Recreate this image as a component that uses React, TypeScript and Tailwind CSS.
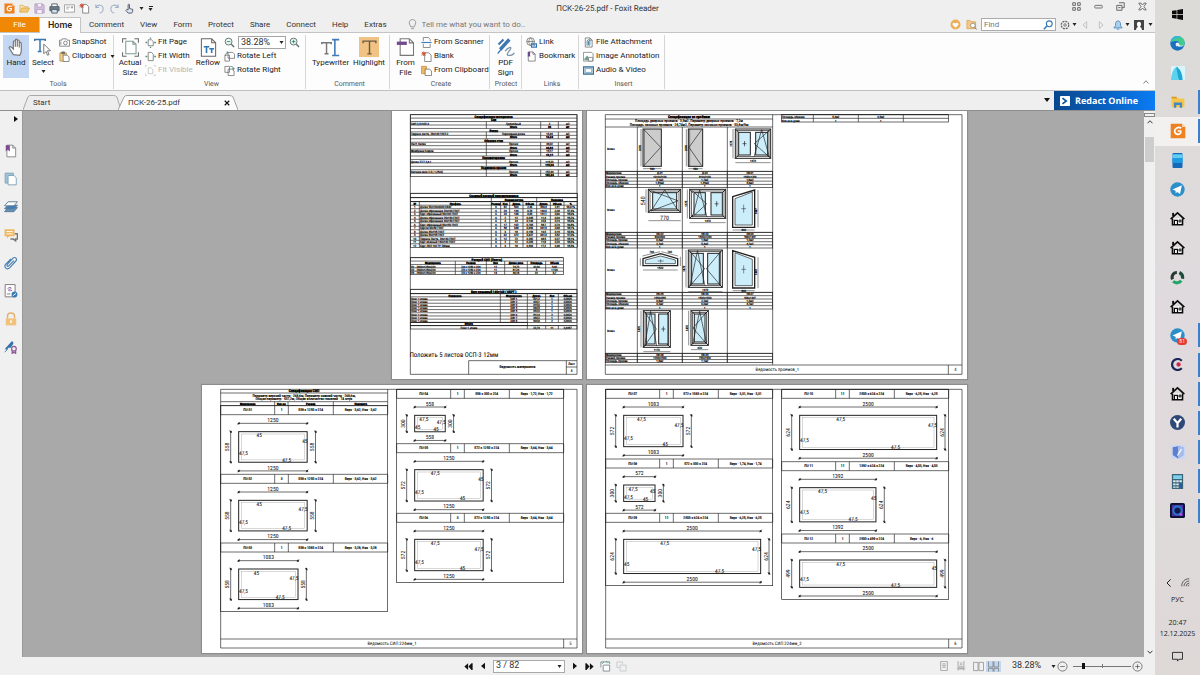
import React from "react";

type Kids = { children?: React.ReactNode };

/* ---------- icon helper ---------- */

function Ico({ s = 12, vb = 24, children, sw = 1.6, c = "#555" }: Kids & { s?: number; vb?: number; sw?: number; c?: string }) {
  return (
    <svg width={s} height={s} viewBox={`0 0 ${vb} ${vb}`} fill="none" stroke={c} strokeWidth={sw} className="shrink-0" aria-hidden="true">
      {children}
    </svg>
  );
}

const Caret = () => (
  <svg width="5" height="3" viewBox="0 0 5 3" className="shrink-0" aria-hidden="true">
    <path d="M0.5 0h4L2.5 3z" fill="#222" />
  </svg>
);

const FoxitMark = ({ s = 11 }: { s?: number }) => (
  <Ico s={s} sw={0}>
    <path d="M1 1h17l5 5v17H1z" fill="#ee8122" />
    <path d="M18 1v5h5z" fill="#fbd9b0" />
    <path d="M17 7.5C12 5 7 8 7 12.500c0 4.500 6 6 9 2.500v-3h-4.500" stroke="#fff" strokeWidth="2.600" fill="none" />
  </Ico>
);

const PageShape = ({ c = "#666" }: { c?: string }) => <path d="M5 2h10l5 5v15H5zM15 2v5h5" stroke={c} fill="#fff" />;

/* ---------- title bar ---------- */

function TitleBar() {
  const quick: [string, React.ReactNode][] = [
    ["Open", <Ico s={11} sw={1.5} c="#d9a548"><path d="M2 20V5h7l2 3h8v3" fill="#fbe3b0" /><path d="M2 20l4-9h17l-4 9z" fill="#f4c874" /></Ico>],
    ["Save", <Ico s={11} sw={2} c="#b79ac6"><path d="M2 2h17l3 3v17H2z" fill="#d5c3df" /><path d="M7 2v7h10V2M6 22v-8h12v8" fill="#f4eef7" /></Ico>],
    ["Print", <Ico s={11} sw={2} c="#4f5d68"><path d="M6 8V2h12v6" fill="#fff" /><path d="M2 8h20v9H2z" fill="#6d7c88" /><path d="M6 14h12v8H6z" fill="#cfe3f0" /></Ico>],
    ["Email", <Ico s={11} sw={1.6} c="#888"><path d="M1 4h22v16H1z" fill="#fff" /><path d="M5 9h8M5 13h5M16 8h3v3h-3z" /></Ico>],
    ["New", <Ico s={11} sw={1.6} c="#666"><path d="M8 3h8l5 5v14H8z" fill="#fff" /><path d="M1 6h10M6 1v10M2.500 2.500l7 7M9.500 2.500l-7 7" stroke="#d2452b" strokeWidth="2" /></Ico>],
    ["Undo", <Ico s={11} sw={2.2} c="#9fb0cc"><path d="M4 3v7h7M4 10c3-8 16-7 16 3 0 4-3 8-8 9" /></Ico>],
    ["Redo", <Ico s={11} sw={2.2} c="#9fb0cc"><path d="M20 3v7h-7M20 10C17 2 4 3 4 13c0 4 3 8 8 9" /></Ico>],
    ["Touch mode", <Ico s={11} sw={2} c="#556"><path d="M9 15V4c0-2 3-2 3 0v8l7 2v4l-2 4H9l-5-6 2-2z" fill="#dce8f2" /></Ico>],
  ];
  return (
    <header className="flex h-[17px] items-center px-1">
      <div className="flex flex-1 items-center gap-1">
        <FoxitMark />
        {quick.map(([n, i]) => (
          <button key={n} aria-label={n} className="flex w-[11px] justify-center">{i}</button>
        ))}
        <Caret />
        <button aria-label="Customize" className="flex flex-col items-center gap-px"><span className="h-px w-1 bg-[#222]" /><Caret /></button>
      </div>
      <h1 className="pl-16 text-[8px] leading-none text-[#333]">ПСК-26-25.pdf - Foxit Reader</h1>
      <div className="flex flex-1 items-center justify-end gap-[13px] pr-1 pb-1">
        <button aria-label="Layout"><Ico s={9} c="#666" sw={2.600}><path d="M2 2h7v7H2zM15 2h7v7h-7zM2 15h7v7H2zM15 15h7v7h-7z" /></Ico></button>
        <button aria-label="Minimize"><Ico s={9} c="#666" sw={2.400}><rect x="2" y="9" width="20" height="7" rx="2" /></Ico></button>
        <button aria-label="Restore"><Ico s={9} c="#666" sw={2.600}><path d="M8 2h14v13h-6M2 9h14v13H2zM6 15h6" /></Ico></button>
        <button aria-label="Close"><Ico s={9} c="#666" sw={2.400}><path d="M2 3h6l4 5 4-5h6l-6 9 6 9h-6l-4-5-4 5H2l6-9z" /></Ico></button>
      </div>
    </header>
  );
}

function MenuTabs() {
  const tabs = ["Comment", "View", "Form", "Protect", "Share", "Connect", "Help", "Extras"];
  return (
    <nav className="flex h-4 items-stretch border-b border-[#c4c4c4] text-[8px] text-[#333]">
      <button className="w-[39px] bg-[#f08705] text-white">File</button>
      <button className="-mb-px w-[42px] border border-b-0 border-[#c4c4c4] bg-[#fdfdfd] text-[9px] font-medium text-[#222]">Home</button>
      {tabs.map((t) => <button key={t} className="px-2">{t}</button>)}
      <label className="ml-3 flex items-center gap-1 text-[#777]">
        <Ico s={11} c="#888" sw={1.800}><path d="M8 17c0-3-3-4-3-9 0-9 14-9 14 0 0 5-3 6-3 9zM9 21h6" /></Ico>
        <input className="w-32 bg-transparent outline-none placeholder:text-[#777]" placeholder="Tell me what you want to do.." />
      </label>
      <div className="ml-auto flex items-center gap-1 pr-0.5">
        <button aria-label="Favourites"><Ico s={11} sw={0}><circle cx="12" cy="12" r="11" fill="#eeae57" /><path d="M12 19l-6-6c-2-4 3-7 6-3 3-4 8-1 6 3z" fill="#fff" /></Ico></button>
        <button aria-label="Search folder" className="ml-px"><Ico s={11} c="#d89b45" sw={1.500}><path d="M2 3h7l2 3h10v15H2z" fill="#f5c985" /><circle cx="15" cy="14" r="5" fill="#fff" stroke="#777" /><path d="M19 18l4 5" stroke="#777" strokeWidth="2" /></Ico></button>
        <label className="flex h-[13px] w-[75px] items-center border border-[#ababab] bg-white px-0.5">
          <input aria-label="Find" placeholder="Find" className="min-w-0 flex-1 bg-transparent text-[8px] outline-none placeholder:text-[#777]" />
          <Ico s={10} c="#2f74b5" sw={2.600}><circle cx="15" cy="9" r="7" /><path d="M10 14l-8 8" strokeWidth="3.500" /></Ico>
        </label>
        <button aria-label="Settings" className="flex items-center gap-0.5"><Ico s={10} c="#666" sw={2}><circle cx="12" cy="12" r="3" /><circle cx="12" cy="12" r="9" strokeDasharray="5 2" strokeWidth="3" /></Ico><Caret /></button>
        <button aria-label="Previous"><Ico s={8} c="#aaa" sw={2}><path d="M17 2v20L6 12z" /></Ico></button>
        <button aria-label="Next" className="ml-1"><Ico s={8} c="#aaa" sw={2}><path d="M7 2v20l11-10z" /></Ico></button>
        <button aria-label="Notifications" className="ml-1 flex items-center gap-0.5"><Ico s={10} c="#4486bd" sw={2}><path d="M2 19l4-5V9c0-9 12-9 12 0v5l4 5z" fill="#a9d0ee" /><path d="M9 22h6" /></Ico><Caret /></button>
        <button aria-label="Account" className="flex items-center gap-1"><Ico s={10} sw={0}><path d="M0 0h24v24H0z" fill="#444" /><path d="M5 24c0-5 3-6 5-7-5-6-3-13 2-13s7 7 2 13c2 1 5 2 5 7z" fill="#fff" /></Ico><Caret /></button>
      </div>
    </nav>
  );
}

/* ---------- ribbon ---------- */

function Group({ label, w, children }: Kids & { label: string; w: string }) {
  return (
    <section className={`${w} flex shrink-0 flex-col border-r border-[#d6d6d6]`}>
      <div className="flex flex-1 items-start">{children}</div>
      <h2 className="text-center text-[7px] leading-[9px] text-[#555]">{label}</h2>
    </section>
  );
}

function Big({ icon, lines, w, active, caret }: { icon: React.ReactNode; lines: string[]; w: string; active?: boolean; caret?: boolean }) {
  return (
    <button className={`${w} ${active ? "bg-[#c3d7f3]" : ""} flex h-[43px] shrink-0 flex-col items-center pt-px text-[8px] leading-[10px] text-[#222]`}>
      <span className="flex h-[22px] items-center">{icon}</span>
      {lines.map((l) => <span key={l} className="whitespace-nowrap">{l}</span>)}
      {caret && <span className="pt-0.5"><Caret /></span>}
    </button>
  );
}

function Row({ icon, label, off, caret }: { icon: React.ReactNode; label: string; off?: boolean; caret?: boolean }) {
  return (
    <button className={`flex h-[14px] items-center gap-0.5 whitespace-nowrap text-[8px] ${off ? "text-[#b5b5b5]" : "text-[#222]"}`}>
      {icon}{label}{caret && <span className="pl-0.5"><Caret /></span>}
    </button>
  );
}

const I = {
  hand: <Ico s={19} c="#777" sw={1.500}><path d="M8 21l-5-8c-1-2 1-3 3-1l2 2V5c0-2 2.500-2 2.500 0v6-8c0-2 2.500-2 2.500 0v8-7c0-2 2.500-2 2.500 0v8-5c0-2 2.500-2 2.500 0v9c0 3-1 4-2 6z" fill="#fff" /></Ico>,
  select: <Ico s={18} c="#3a76b0" sw={2}><path d="M1 4V2h14v2M8 2v16M5 18h5" /><path d="M13 8v13l3-3 2 5 2-1-2-5h4z" fill="#fff" stroke="#777" strokeWidth="1.300" /></Ico>,
  snap: <Ico s={11} c="#666"><path d="M1 7h5l1-3h9l2 3h5v13H1z" fill="#fff" /><circle cx="14" cy="13" r="4" /><path d="M4 10v7" /></Ico>,
  clip: <Ico s={11} c="#b28a3d"><path d="M2 4h14v18H2z" fill="#f1cf8b" /><path d="M6 2h6v4H6z" fill="#777" stroke="#666" /><path d="M9 9h9l4 4v10H9z" fill="#fff" stroke="#666" /></Ico>,
  actual: <Ico s={19} c="#666" sw={1.300}><path d="M6 4h9l4 4v12H6zM15 4v4h4" fill="#fff" stroke="#7d9c90" /><path d="M2 6V1h5M17 1h5v5M2 18v5h5M17 23h5v-5" /></Ico>,
  fitPage: <Ico s={11} c="#666"><path d="M7 6h7l4 4v9H7z" fill="#fff" /><path d="M12 1v3M12 21v3M1 12h4M20 12h4" stroke="#5d8f7c" strokeWidth="3" /></Ico>,
  fitWidth: <Ico s={11} c="#666"><path d="M7 3h7l4 4v14H7z" fill="#fff" /><path d="M1 12h4M20 12h4" stroke="#5d8f7c" strokeWidth="3" /></Ico>,
  fitVis: <Ico s={11} c="#bbb"><path d="M7 6h6l4 4v9H7z" /><path d="M1 5V1h4M19 1h4v4M1 19v4h4M19 23h4v-4" strokeDasharray="3 1" /></Ico>,
  reflow: <Ico s={19} c="#666" sw={1.300}><path d="M3 1h13l5 5v17H3zM16 1v5h5" fill="#fff" /><path d="M6 11h7M9.500 11v8M13 13.500h6M16 13.500V19" stroke="#3276b5" strokeWidth="2" /></Ico>,
  minus: <Ico s={11} c="#5d6f70" sw={2}><circle cx="10" cy="10" r="7.500" fill="#eef8f3" /><path d="M6 10h8" stroke="#35906d" /><path d="M16 16l6 6" strokeWidth="3" /></Ico>,
  plus: <Ico s={11} c="#5d6f70" sw={2}><circle cx="10" cy="10" r="7.500" fill="#eef8f3" /><path d="M6 10h8M10 6v8" stroke="#35906d" /><path d="M16 16l6 6" strokeWidth="3" /></Ico>,
  rotL: <Ico s={11} c="#666"><path d="M9 3h10l4 4v9H9zM2 9h10v13H2z" fill="#fff" /><path d="M3 11c0-5 2-7 6-8M6 1l3 2-2 3" stroke="#4c927b" strokeWidth="2" /></Ico>,
  rotR: <Ico s={11} c="#666"><path d="M2 3h10v13H2zM9 9h8l5 4v10H9z" fill="#fff" /><path d="M14 3c5 0 7 2 7 6M18 7l3 3 2-3" stroke="#4c927b" strokeWidth="2" /></Ico>,
  type: <Ico s={19} c="#777" sw={1.800}><path d="M1 8V6h12v2M7 6v14M4.500 20h5" /><path d="M14 2h3.500v20M23 2h-4.500M14 22h9" stroke="#3f7cb8" strokeWidth="2" /></Ico>,
  high: <span className="flex h-[20px] w-[20px] items-center justify-center bg-[#f0c283]"><Ico s={17} c="#6a5a45" sw={2}><path d="M3 6V3h18v3M12 3v18M9 21h6" /></Ico></span>,
  file: <Ico s={20} c="#777" sw={1.300}><path d="M5 2h11l5 5v15H5zM16 2v5h5" fill="#fff" /><path d="M1 7.500h12" stroke="#714a93" strokeWidth="4" /></Ico>,
  scan: <Ico s={11} c="#666"><path d="M5 9V1h11l4 4v4M5 15v8h15v-8" fill="#fff" /><path d="M1 12h22" stroke="#3f7fb5" strokeWidth="2.500" /></Ico>,
  blank: <Ico s={11} c="#666"><path d="M8 4h9l5 5v14H8z" fill="#fff" /><path d="M1 6h10M6 1v10M2 2l8 8M10 2l-8 8" stroke="#cf4a2c" strokeWidth="2" /></Ico>,
  fromClip: <Ico s={11} c="#c68d36"><path d="M1 3h11v16H1z" fill="#eeb765" /><path d="M9 9h9l5 4v10H9z" fill="#fff" stroke="#666" /></Ico>,
  sign: <Ico s={20} c="#3c77b0" sw={3}><path d="M5 15L16 3" strokeWidth="4" /><path d="M3 9L9 3" strokeWidth="2.500" /><path d="M2 20l4-5" strokeWidth="1.500" /><path d="M11 17c3-5 9-6 6-2s-6 8 0 7c2 0 4-1 5-3" strokeWidth="1.500" stroke="#7a93ab" /></Ico>,
  link: <Ico s={11} c="#666"><circle cx="10" cy="10" r="8.500" /><path d="M2 10h17M10 2c-5 5-5 11 0 16M10 2c5 5 5 11 0 16" /><path d="M12 15h11v7H12zM16 18h4" stroke="#3476b2" strokeWidth="2.500" /></Ico>,
  bookmark: <Ico s={11} c="#666"><PageShape /><path d="M4 2h5v11l-2.500-2L4 13z" fill="#70488e" stroke="none" /></Ico>,
  attach: <Ico s={11} c="#666"><PageShape /><path d="M9 19V9c0-4 6-4 6 0v8c0 2-3 2-3 0V9" stroke="#3c7d9d" strokeWidth="2" /></Ico>,
  image: <Ico s={11} c="#777"><path d="M1 3h18l3 3v16H1z" fill="#fff" /><path d="M3 17l6-7 5 6 3-3 4 5v2H3z" fill="#6fa38c" stroke="none" /><path d="M12 14h9v8h-9z" fill="#fff" /></Ico>,
  video: <Ico s={11} c="#3c6e93" sw={2.500}><path d="M1 4h22v16H1z" fill="#b7d5e6" /><path d="M5 8h14v8H5z" fill="#fff" strokeWidth="1" /></Ico>,
};

function Ribbon() {
  return (
    <div className="flex h-[58px] items-stretch border-b border-[#c0c0c0] bg-[#fdfdfd] pt-0.5 pb-px">
      <Group label="Tools" w="w-[114px] pl-[3px]">
        <Big icon={I.hand} lines={["Hand"]} w="w-[26px]" active />
        <Big icon={I.select} lines={["Select"]} w="w-[28px]" caret />
        <div className="pl-0.5"><Row icon={I.snap} label="SnapShot" /><Row icon={I.clip} label="Clipboard" caret /></div>
      </Group>
      <Group label="View" w="w-[192px] pl-1">
        <Big icon={I.actual} lines={["Actual", "Size"]} w="w-[24px]" />
        <div className="w-[51px] shrink-0 pl-[3px]"><Row icon={I.fitPage} label="Fit Page" /><Row icon={I.fitWidth} label="Fit Width" /><Row icon={I.fitVis} label="Fit Visible" off /></div>
        <Big icon={I.reflow} lines={["Reflow"]} w="w-[30px]" />
        <div className="pl-px">
          <div className="flex h-[14px] items-center gap-[3px]">
            <button aria-label="Zoom out">{I.minus}</button>
            <span className="relative flex items-center">
              <select aria-label="Zoom level" className="h-[13px] w-12 appearance-none border border-[#a5a5a5] bg-white pl-0.5 text-[9px] leading-none text-[#333]"><option>38.28%</option></select>
              <span className="pointer-events-none absolute right-0.5"><Caret /></span>
            </span>
            <button aria-label="Zoom in">{I.plus}</button>
          </div>
          <Row icon={I.rotL} label="Rotate Left" /><Row icon={I.rotR} label="Rotate Right" />
        </div>
      </Group>
      <Group label="Comment" w="w-[84px] pl-1">
        <Big icon={I.type} lines={["Typewriter"]} w="w-[41px]" />
        <Big icon={I.high} lines={["Highlight"]} w="w-[36px]" />
      </Group>
      <Group label="Create" w="w-[100px] pl-[3px]">
        <Big icon={I.file} lines={["From", "File"]} w="w-[25px]" />
        <div className="pl-[3px]"><Row icon={I.scan} label="From Scanner" /><Row icon={I.blank} label="Blank" /><Row icon={I.fromClip} label="From Clipboard" /></div>
      </Group>
      <Group label="Protect" w="w-[32px] pl-px"><Big icon={I.sign} lines={["PDF", "Sign"]} w="w-[29px]" /></Group>
      <Group label="Links" w="w-[57px] pl-1"><div><Row icon={I.link} label="Link" /><Row icon={I.bookmark} label="Bookmark" /></div></Group>
      <Group label="Insert" w="w-[86px] pl-1"><div><Row icon={I.attach} label="File Attachment" /><Row icon={I.image} label="Image Annotation" /><Row icon={I.video} label="Audio & Video" /></div></Group>
      <button aria-label="Collapse ribbon" className="mt-auto mr-1.5 mb-1 ml-auto"><Ico s={6} c="#555" sw={3}><path d="M2 18L12 7l10 11" /></Ico></button>
    </div>
  );
}

function DocTab({ label, w, fill, close }: { label: string; w: string; fill: string; close?: boolean }) {
  return (
    <div className={`${w} relative flex h-[15px] items-center justify-between pt-px pr-2 pl-2.5 text-[8px] text-[#333]`}>
      <svg className="absolute inset-0 h-full w-full" viewBox="0 0 120 15" preserveAspectRatio="none" aria-hidden="true">
        <path d="M0 15L6 2Q7 .5 9 .5H111Q114 .5 115 2L120 15" fill={fill} stroke="#a0a0a0" />
      </svg>
      <button className="relative">{label}</button>
      {close && <button aria-label="Close tab" className="relative"><Ico s={6} c="#111" sw={4.500}><path d="M3 3l18 18M21 3L3 21" /></Ico></button>}
    </div>
  );
}

function DocTabs() {
  return (
    <div className="flex h-[20px] items-end border-b border-[#8e8e8e] pl-[23px]">
      <DocTab label="Start" w="w-[98px]" fill="#ededed" />
      <div className="-ml-[3px]"><DocTab label="ПСК-26-25.pdf" w="w-[120px]" fill="#fcfcfc" close /></div>
      <button aria-label="Tab list" className="mr-1 mb-[7px] ml-auto"><Ico s={6} sw={0}><path d="M0 4h24L12 20z" fill="#111" /></Ico></button>
      <a href="#redact" className="flex h-[19px] w-[101px] items-center gap-[5px] bg-linear-to-r from-[#08478f] to-[#0a7cf5] pl-1.5 font-['Open_Sans',sans-serif] text-[9px] font-bold text-white">
        <Ico s={10} sw={0}><rect width="24" height="24" rx="2" fill="#fff" /><path d="M6 5l9 7-9 7" stroke="#0c519c" strokeWidth="4" /></Ico>
        Redact Online
      </a>
    </div>
  );
}

function SideBar() {
  const items: [string, React.ReactNode][] = [
    ["Bookmarks", <Ico s={14} c="#888"><PageShape c="#888" /><path d="M3 2h7v11l-3.500-3L3 13z" fill="#7b4a92" stroke="none" /></Ico>],
    ["Pages", <Ico s={14} c="#7da4b8"><path d="M2 2h14v17H2z" fill="#9fc4d6" /><path d="M7 6h10l4 4v12H7z" fill="#fff" /></Ico>],
    ["Layers", <Ico s={14} c="#5b7890"><path d="M1 20l6-7h16l-6 7z" fill="#5f94be" /><path d="M1 15l6-6h16l-6 6z" fill="#3f7fb9" /><path d="M1 10l6-7h16l-6 7z" fill="#fff" /></Ico>],
    ["Comments", <Ico s={14} c="#777" sw={2.500}><path d="M18 10h5v9h-3v3l-4-3h-5" /><path d="M1 2h17v12H9l-4 4v-4H1z" fill="#efb860" stroke="none" /><path d="M4 6h11M4 10h11" stroke="#fff" strokeWidth="1.500" /></Ico>],
    ["Attachments", <Ico s={14} c="#4a80b2" sw={2}><path d="M17 8l-9 9c-2 2-4-1-2-3l9-10c4-4 9 1 5 5L10 20c-5 5-11-1-7-6l9-9" /></Ico>],
    ["Signatures", <Ico s={14} c="#777"><path d="M2 1h17v21H2z" fill="#fff" /><path d="M6 8c6-5 9 0 4 1s-2 4 4 2" stroke="#9561a5" /><path d="M5 17h6" /><circle cx="18" cy="18" r="5" fill="#397cb5" stroke="none" /><path d="M15.500 20l5-4" stroke="#fff" /></Ico>],
    ["Security", <Ico s={14} c="#e5b06a" sw={2.500}><path d="M6 11V7c0-7 12-7 12 0v4" /><path d="M3 11h18v12H3z" fill="#f2c27c" stroke="none" /><path d="M12 14v5" stroke="#fff" /></Ico>],
    ["Digital signing", <Ico s={14} c="#3371a8" sw={3.500}><path d="M3 16L15 3M9 13l6-8" /><circle cx="17" cy="15" r="4" stroke="#8b5797" strokeWidth="2" /><path d="M14 18v5l3-2 3 2v-5" stroke="#8b5797" strokeWidth="2" /><path d="M1 21l5-5" strokeWidth="1.500" /></Ico>],
  ];
  return (
    <aside className="flex w-[23px] shrink-0 flex-col items-center border-r border-[#999] bg-[#f0f0f0]">
      <button aria-label="Expand panel" className="flex h-4 w-full items-center justify-end pr-1"><svg width="4" height="6" aria-hidden="true"><path d="M0 0l4 3-4 3z" fill="#111" /></svg></button>
      <div className="flex h-[228px] flex-col items-center pt-2.5">
        {items.map(([n, i]) => <button key={n} aria-label={n} className="flex flex-1 shrink-0 items-center py-[7px]">{i}</button>)}
      </div>
    </aside>
  );
}

/* ---------- sheets ---------- */

const FONT = "'Liberation Sans Narrow','Roboto Condensed','Open Sans Condensed','Liberation Sans',sans-serif";

function T({ x, y, s = 9, a = "middle", b, r, children }: Kids & { x: number; y: number; s?: number; a?: "start" | "middle" | "end"; b?: boolean; r?: boolean }) {
  return (
    <text x={x} y={y} fontSize={s} textAnchor={a} fontWeight={b ? 700 : 400} transform={r ? `rotate(-90 ${x} ${y})` : undefined} fill="#000" stroke={s < 13 ? "#000" : "none"} strokeWidth={b ? 1 : 0.5} fontFamily={FONT}>
      {children}
    </text>
  );
}

type GridRow = { c: string[]; b?: boolean; span?: boolean };

function Grid({ y, y2, cols, rows, left = 0 }: { y: number; y2: number; cols: number[]; rows: GridRow[]; left?: number }) {
  const h = (y2 - y) / rows.length;
  const x1 = cols[0], x2 = cols[cols.length - 1];
  return (
    <g>
      <rect x={x1} y={y} width={x2 - x1} height={y2 - y} />
      {rows.map((row, i) => {
        const t = y + i * h;
        return (
          <g key={i}>
            <path d={`M${x1} ${t}H${x2}`} />
            {row.span
              ? <T x={(x1 + x2) / 2} y={t + h - 1} s={10} b>{row.c[0]}</T>
              : row.c.map((c, j) => (
                <g key={j}>
                  {j > 0 && <path d={`M${cols[j]} ${t}v${h}`} />}
                  {j === left && !row.b ? <T x={cols[j] + 2} y={t + h - 1} a="start">{c}</T> : <T x={(cols[j] + cols[j + 1]) / 2} y={t + h - 1} b={row.b}>{c}</T>}
                </g>
              ))}
          </g>
        );
      })}
    </g>
  );
}

function Sheet({ vb, w, label, children }: Kids & { vb: string; w: string; label: string }) {
  return (
    <article aria-label={label} className={`${w} justify-self-end bg-white shadow-[0_0_1px_1px_#8c8c8c]`}>
      <svg viewBox={vb} className="block w-full" fill="none" stroke="#222" strokeWidth="2">{children}</svg>
    </article>
  );
}

const sp = (s: string): GridRow => ({ c: [s], span: true });
const total = (n: string, u: string): GridRow => ({ c: ["", "Итого", n, u], b: true });

function Sheet3() {
  const cut = [
    ["1", "Доска 50х100х6000 СКАТ", "6", "82", "500", "2,46", "490,4", "2,41", "98,07%"],
    ["2", "Доска обрезанная 20х100 ГОСТ", "6", "24", "144", "0,29", "140,3", "0,28", "97,4%"],
    ["3", "Брус обрезанный 50х100 ГОСТ", "6", "23", "138", "0,69", "131,1", "0,66", "95,0%"],
    ["4", "Доска обрезанная 25х150 ГОСТ", "6", "2", "12", "0,045", "11,4", "0,04", "95,2%"],
    ["5", "Доска обрезанная 40х150 ГОСТ", "6", "4", "24", "0,144", "22,8", "0,14", "95,0%"],
    ["6", "Брус обрезанный 50х150 ГОСТ", "6", "17", "102", "0,765", "98,7", "0,74", "96,8%"],
    ["7", "Брусок 40х50 ГОСТ", "6", "58", "348", "0,696", "341,5", "0,68", "98,1%"],
    ["8", "Доска 45х195 ГОСТ", "6", "3", "18", "0,158", "16,9", "0,15", "93,9%"],
    ["9", "Доска 50х195 ГОСТ", "6", "62", "372", "3,627", "361,0", "3,52", "97,0%"],
    ["10", "Терраса Листв. 28х140 ГОСТ", "6", "12", "72", "0,282", "68,5", "0,27", "95,1%"],
    ["11", "Брус клееный 140х140 ГОСТ", "6", "2", "12", "0,235", "11,8", "0,23", "98,3%"],
    ["12", "Брус ЛВЛ 100 ТУ 280мм", "6", "3", "18", "0,504", "17,2", "0,48", "95,5%"],
  ];
  const steel = ["421,2", "420,1", "415,0", "360,5", "392,0", "512,4", "490,2", "503,8"];
  return (
    <Sheet vb="9 3 570 804" w="w-[190px]" label="Page 3">
      <path d="M64 14V793H564V14" />
      <Grid y={14} y2={200} cols={[64, 292, 455, 508, 564]} rows={[
        sp("Спецификация материалов"), sp("Сип"), { c: ["СИП 2,5 ОСП-3", "Грубелёный", "2", "м2"] }, total("28", "шт"),
        sp("Балки"), { c: ["Терраса листв. 28х140 ГОСТ-2", "Переходная доска", "13,44", "м2"] }, total("13,44", "м2"),
        sp("Обвязка стен"), { c: ["Лист, балка", "Прочее", "44,02", "м2"] }, total("44,02", "м2"), { c: ["Мембрана покров", "Прочее", "15,17", "м2"] }, total("15,17", "м2"),
        sp("Пиломатериалы"), { c: ["Доска Т-Т-Т 2,4-1", "Прочее", "115,23", "м2"] }, total("115,23", "м2"),
        sp("Подшивка кровли"), { c: ["Вагонка хвоя 2-3 ( 1,25х3)", "Прочее", "152,44", "м2"] }, total("152,44", "м2"),
      ]} />
      <Grid y={250} y2={263} cols={[64, 565]} rows={[sp("Сводный раскрой пиломатериалов")]} />
      <Grid y={263} y2={275} cols={[64, 307, 443, 565]} rows={[{ c: ["", "Номенклатура", "Полезное"], b: true }]} />
      <Grid y={275} y2={412} cols={[64, 91, 307, 335, 362, 402, 443, 484, 525, 565]} left={1} rows={[
        { c: ["№", "Профиль", "Размер", "Кол", "Длина", "Объем", "Длина", "Объем", "%"], b: true },
        ...cut.map((c) => ({ c })),
      ]} />
      <Grid y={443} y2={494} cols={[64, 199, 292, 347, 415, 470, 523]} rows={[
        sp("Раскрой СИП (Плиты)"), { c: ["Маркировка", "Размер", "Кол", "Длина реза", "Площадь", "Объем"], b: true },
        { c: ["П1 - 2800х1250х224", "2,8 х 1250 х 224", "12", "74,72", "42,00", "9,40"] },
        { c: ["П2 - 2500х1250х224", "2,5 х 1250 х 224", "11", "81,24", "5", "1,126"] },
        { c: ["П3 - 2500х1250х224", "2,5 х 1250 х 224", "14", "46,18", "31", "6,7"] },
      ]} />
      <Grid y={538} y2={551} cols={[64, 564]} rows={[sp("Брус клеенный 140х140 ( ОБРТ )")]} />
      <Grid y={551} y2={637} cols={[64, 334, 415, 470, 508, 564]} rows={[
        { c: ["Наименов.", "Маркировка", "Длина", "Кол", "Объем"], b: true },
        ...steel.map((s, i) => ({ c: ["Пояс 1 этажа", `БКт ${i + 1}`, s, String((i % 2) + 1), "0,0826"] })),
      ]} />
      <Grid y={637} y2={647} cols={[64, 415]} rows={[sp("Итого")]} />
      <Grid y={647} y2={657} cols={[64, 415, 470, 508, 564]} left={-1} rows={[{ c: ["Пояс 1 этажа", "22,74", "11", "0,4457"] }]} />
      <T x={62} y={742} s={20} a="start">Положить 5 листов ОСП-3 12мм</T>
      <path d="M239 793V752H564M532 752v41M532 771h32" />
      <T x={385} y={775} s={11}>Ведомость материалов</T>
      <T x={548} y={766} s={10}>Лист</T><T x={548} y={787} s={10}>3</T>
    </Sheet>
  );
}

/* window unit: outer frame, glazed panes and opening lines */
function Win({ x, y, w, h, panes, wl, hl, s = 9 }: { x: number; y: number; w: number; h: number; panes: { x: number; w: number; open?: "l" | "r"; tilt?: boolean }[]; wl: string; hl: string; s?: number }) {
  return (
    <g>
      <rect x={x} y={y} width={w} height={h} strokeWidth="3" fill="#fff" />
      <rect x={x + 5} y={y + 5} width={w - 10} height={h - 10} />
      <path d={`M${x} ${y}l10 10M${x + w} ${y}l-10 10M${x} ${y + h}l10-10M${x + w} ${y + h}l-10-10`} strokeWidth="3" />
      {panes.map((p, i) => {
        const t = y + 10, b = y + h - 10, m = (t + b) / 2, r = p.x + p.w;
        return (
          <g key={i}>
            <rect x={p.x} y={t} width={p.w} height={b - t} fill="#cceefb" strokeWidth="3" />
            {p.open === "l" && <path d={`M${r + 5} ${y + 4}L${p.x - 4} ${m}L${r + 5} ${y + h - 4}`} />}
            {p.open === "r" && <path d={`M${p.x - 5} ${y + 4}L${r + 4} ${m}L${p.x - 5} ${y + h - 4}`} />}
            {p.tilt && <path d={`M${p.x - 5} ${y + h - 4}L${p.x + p.w / 2} ${y + 2}L${r + 5} ${y + h - 4}`} />}
            {!p.open && !p.tilt && <path d={`M${p.x + p.w / 2 - 6} ${m}h12M${p.x + p.w / 2} ${m - 8}v16`} />}
          </g>
        );
      })}
      <path d={`M${x} ${y + h + (s > 10 ? 25 : 13)}h${w}M${x - 7} ${y}v${h}`} strokeWidth="1.500" />
      <T x={x + w / 2} y={y + h + (s > 10 ? 22 : 11)} s={s}>{wl}</T>
      <T x={x - 9} y={y + h / 2} s={s} r>{hl}</T>
    </g>
  );
}

function Door({ x, w, r }: { x: number; w: number; r?: boolean }) {
  return (
    <g>
      <rect x={x} y={57} width={w} height={112} fill="#ccc" strokeWidth="3" />
      <path d={r ? `M${x + 3} 59L${x + w - 2} 112L${x + 3} 167` : `M${x + w - 3} 59L${x + 2} 112L${x + w - 3} 167`} />
      <path d={`M${x} 176h${w}M${x - 6} 57v112M${x + 4} 57v112`} strokeWidth="1.500" />
      <T x={x + w / 2} y={181} s={9}>980</T><T x={x - 5} y={114} s={9} r>2090</T>
    </g>
  );
}

function Slant({ x, y, h, flip }: { x: number; y: number; h: number; flip?: boolean }) {
  const l = flip ? y : y + 20, r = flip ? y + 20 : y;
  return (
    <g>
      <path d={`M${x} ${l}L${x + 66} ${r}V${y + h}H${x}z`} fill="#fff" strokeWidth="4" />
      <path d={`M${x + 7} ${l + 6}L${x + 59} ${r + 6}V${y + h - 7}H${x + 7}z`} fill="#cceefb" />
      <path d={`M${x + 26} ${y + h / 2}h14M${x + 33} ${y + h / 2 - 12}v24M${x} ${y + h + 8}h66M${x + 76} ${r}V${y + h}`} strokeWidth="1.500" />
      <T x={x + 33} y={y + h + 12}>860</T><T x={x + 74} y={y + h / 2 + 8} r>1447</T>
    </g>
  );
}

function Sheet4() {
  const names = ["Маркировка", "Размер проема", "Площадь проема", "Площадь обвязки", "Кол-во в доме"];
  const blocks: { t: number; y: number; y2: number; n: number; v: string[][] }[] = [
    { t: 120, y: 184, y2: 233, n: 5, v: [["Д-01", "1010х2100", "2,1м2", "1,89м2", "1"], ["Д-02", "810х2100", "1,7м2", "1,49м2", "1"], ["ОК-01", "1500х1200", "1,8м2", "5,4м2", "1"]] },
    { t: 302, y: 367, y2: 414, n: 5, v: [["ОК-02", "800х560", "0,4м2", "2,7м2", "1"], ["ОК-03", "1500х1200", "1,8м2", "5,4м2", "1"], ["ОК-04", "900х1447", "1,2м2", "4,7м2", "1"]] },
    { t: 483, y: 547, y2: 597, n: 5, v: [["ОК-05", "1550х555", "0,8м2", "4,2м2", "1"], ["ОК-06", "1500х1500", "2,2м2", "6,0м2", "1"], ["ОК-07", "900х1447", "1,2м2", "4,7м2", "1"]] },
    { t: 665, y: 730, y2: 758, n: 3, v: [["ОК-08", "1200х1500", "1,8м2"], ["ОК-09", "750х1500", "1,1м2"], ["", "", ""]] },
  ];
  return (
    <Sheet vb="6 3 1140 804" w="w-[380px]" label="Page 4">
      <path d="M61 14H1131V793H61zM61 765H1131M1090 765v28M61 27h502M61 51h502M563 14V765M157 51V758M292 51V758M427 51V758" />
      <T x={312} y={24} s={11} b>Спецификация по проёмам</T>
      <T x={312} y={37} s={11}>Площадь дверных проемов - 3,9м2, Периметр дверных проемов - 7,2м</T>
      <T x={312} y={48} s={11}>Площадь оконных проемов - 28,74м2, Периметр оконных проемов - 53,8м/9м</T>
      {blocks.map((b) => (
        <g key={b.y}>
          <T x={66} y={b.t} a="start">Эскиз</T>
          <Grid y={b.y} y2={b.y2} cols={[61, 157, 292, 427, 563]} rows={names.slice(0, b.n).map((n, i) => ({ c: [n, ...b.v.map((v) => v[i])] }))} />
        </g>
      ))}
      <Door x={174} w={55} r /><Door x={310} w={43} />
      <Win x={451} y={57} w={106} h={88} wl="1470" hl="1170" panes={[{ x: 461, w: 35 }, { x: 512, w: 36, open: "l", tilt: true }]} />
      <Win x={190} y={238} w={97} h={69} wl="770" hl="540" s={18} panes={[{ x: 203, w: 72, open: "r", tilt: true }]} />
      <Win x={314} y={238} w={108} h={87} wl="1470" hl="1170" panes={[{ x: 327, w: 34, open: "r", tilt: true }, { x: 378, w: 34 }]} />
      <Slant x={443} y={240} h={112} /><Slant x={443} y={422} h={112} flip />
      <path d="M174 446L227 431L278 446V467H174z" strokeWidth="4" fill="#fff" /><path d="M181 450L227 438L271 450V461H181z" fill="#cceefb" />
      <path d="M218 453h18M227 448v10M174 480h104M172 438l53-13M229 425l50 13M286 440v28M166 445v22" strokeWidth="1.500" />
      <T x={226} y={478}>1520</T><T x={200} y={428}>760</T><T x={254} y={428}>760</T>
      <Win x={310} y={420} w={102} h={112} wl="1470" hl="1470" panes={[{ x: 320, w: 35, open: "r", tilt: true }, { x: 368, w: 35, open: "l" }]} />
      <Win x={175} y={602} w={81} h={110} wl="1170" hl="1470" panes={[{ x: 184, w: 26, open: "r", tilt: true }, { x: 221, w: 28 }]} />
      <Win x={318} y={602} w={52} h={104} wl="620" hl="1470" panes={[{ x: 328, w: 32, open: "l", tilt: true }]} />
      <Grid y={14} y2={36} cols={[589, 685, 820, 955, 1090]} rows={[{ c: ["Площадь обвязки", "5,4м2", "4,5м2", ""] }, { c: ["Кол-во в доме", "1", "1", ""] }]} />
      <T x={577} y={784} s={14}>Ведомость проемов_1</T><T x={1111} y={784} s={14}>4</T>
    </Sheet>
  );
}

type Panel = { y: number; n: string; q: string; w: number; h: number; p: string; t: string; r: string; b: string; l: string };
const K = 0.1644;

function DimH({ x1, x2, y, v }: { x1: number; x2: number; y: number; v: number }) {
  return (
    <g>
      <path d={`M${x1} ${y}H${x2}M${x1 + 3} ${y - 4}l-6 8M${x2 + 3} ${y - 4}l-6 8`} />
      <path d={`M${x1 - 2} ${y - 1}h4v3h-4zM${x2 - 2} ${y - 1}h4v3h-4z`} fill="#111" />
      <T x={(x1 + x2) / 2} y={y - 4} s={17}>{v}</T>
    </g>
  );
}

function DimV({ x, y1, y2, v }: { x: number; y1: number; y2: number; v: number }) {
  return (
    <g>
      <path d={`M${x} ${y1}V${y2}M${x - 4} ${y1 - 3}l8 6M${x - 4} ${y2 - 3}l8 6`} />
      <path d={`M${x - 1} ${y1 - 2}h3v4h-3zM${x - 1} ${y2 - 2}h3v4h-3z`} fill="#111" />
      <T x={x - 4} y={(y1 + y2) / 2} s={17} r>{v}</T>
    </g>
  );
}

const size = ({ w, h }: Panel) => (h === 300 || w > 1300 ? `${w} x ${h} x 224` : `${h} x ${w} x 224`);

function Column({ x, end, panels }: { x: number; end: number; panels: Panel[] }) {
  return (
    <g>
      <rect x={x} y={panels[0].y} width={501} height={end - panels[0].y} />
      {panels.map((p) => {
        const rx = x + 54, ry = p.y + 78, rw = p.w * K, rh = p.h * K, r = rx + rw, b = ry + rh;
        return (
          <g key={p.n}>
            <path d={`M${x} ${p.y}h501v27h-501zM${x + 162} ${p.y}v27M${x + 203} ${p.y}v27M${x + 338} ${p.y}v27`} />
            <T x={x + 81} y={p.y + 17} s={11}>{p.n}</T>
            <T x={x + 183} y={p.y + 17} s={11}>{p.q}</T>
            <T x={x + 270} y={p.y + 17} s={11}>{size(p)}</T>
            <T x={x + 420} y={p.y + 17} s={11}>{p.p}</T>
            <rect x={rx} y={ry} width={rw} height={rh} strokeWidth="3" />
            <rect x={rx + 8} y={ry + 7} width={rw - 16} height={rh - 14} strokeWidth="1" stroke="#888" />
            <DimH x1={rx} x2={r} y={ry - 25} v={p.w} /><DimH x1={rx} x2={r} y={b + 26} v={p.w} />
            <DimV x={rx - 24} y1={ry} y2={b} v={p.h} /><DimV x={r + 25} y1={ry} y2={b} v={p.h} />
            <T x={rx + rw * 0.3} y={ry + 17} s={16}>{p.t}</T>
            <T x={r + 1} y={ry + rh * 0.2 + 15} s={16} a="end">{p.r}</T>
            <T x={rx + rw * 0.7} y={b - 2} s={16}>{p.b}</T>
            <T x={rx + 1} y={ry + rh * 0.7 + 7} s={16} a="start">{p.l}</T>
          </g>
        );
      })}
    </g>
  );
}

const A = "47,5", B = "45";

function Frame({ title, n }: { title: string; n: string }) {
  return (
    <g>
      <path d="M64 27H1133V803H64zM64 776H1133M1093 776v27" />
      <T x={578} y={795} s={14}>{title}</T><T x={1113} y={795} s={14}>{n}</T>
    </g>
  );
}

function Sheet5() {
  return (
    <Sheet vb="8 14 1140 804" w="w-[380px]" label="Page 5">
      <Frame title="Ведомость СИП 224мм_1" n="5" />
      <path d="M64 38H565M64 64H565M565 27V76M226 64v12M266 64v12M402 64v12" />
      <T x={314} y={36} s={11} b>Спецификация СИП</T>
      <T x={314} y={49} s={11}>Периметр верхней части - 268,6м, Периметр нижней части - 268,6м,</T>
      <T x={314} y={60} s={11}>Общая периметр - 537,2м, Общее количество панелей - 74 штук</T>
      <T x={145} y={74} b>Маркировка</T><T x={246} y={74} b>Кол-во</T><T x={334} y={74} b>Размер</T><T x={484} y={74} b>Периметр</T>
      <Column x={64} end={693} panels={[
        { y: 76, n: "ПU-01", q: "1", w: 1250, h: 558, p: "Верх - 3,62, Низ - 3,62", t: B, r: B, b: A, l: A },
        { y: 282, n: "ПU-02", q: "3", w: 1250, h: 558, p: "Верх - 3,62, Низ - 3,62", t: B, r: A, b: A, l: A },
        { y: 488, n: "ПU-03", q: "1", w: 1083, h: 558, p: "Верх - 3,28, Низ - 3,28", t: B, r: A, b: A, l: A },
      ]} />
      <Column x={592} end={607} panels={[
        { y: 27, n: "ПU-04", q: "1", w: 558, h: 300, p: "Верх - 1,72, Низ - 1,72", t: A, r: A, b: B, l: B },
        { y: 190, n: "ПU-05", q: "1", w: 1250, h: 572, p: "Верх - 3,64, Низ - 3,64", t: A, r: B, b: B, l: A },
        { y: 399, n: "ПU-06", q: "3", w: 1250, h: 572, p: "Верх - 3,64, Низ - 3,64", t: A, r: A, b: B, l: A },
      ]} />
    </Sheet>
  );
}

function Sheet6() {
  return (
    <Sheet vb="8 14 1140 804" w="w-[380px]" label="Page 6">
      <Frame title="Ведомость СИП 224мм_2" n="6" />
      <Column x={64} end={616} panels={[
        { y: 27, n: "ПU-07", q: "1", w: 1083, h: 572, p: "Верх - 3,31, Низ - 3,31", t: A, r: A, b: B, l: A },
        { y: 236, n: "ПU-08", q: "1", w: 572, h: 300, p: "Верх - 1,74, Низ - 1,74", t: A, r: B, b: B, l: A },
        { y: 399, n: "ПU-09", q: "11", w: 2500, h: 624, p: "Верх - 6,25, Низ - 6,25", t: A, r: A, b: A, l: B },
      ]} />
      <Column x={592} end={657} panels={[
        { y: 27, n: "ПU-10", q: "11", w: 2500, h: 624, p: "Верх - 6,25, Низ - 6,25", t: A, r: A, b: A, l: A },
        { y: 244, n: "ПU-11", q: "11", w: 1392, h: 624, p: "Верх - 4,03, Низ - 4,03", t: A, r: B, b: A, l: A },
        { y: 461, n: "ПU-12", q: "1", w: 2500, h: 499, p: "Верх - 6, Низ - 6", t: A, r: B, b: A, l: A },
      ]} />
    </Sheet>
  );
}

/* ---------- status bar ---------- */

function StatusBar() {
  return (
    <footer className="flex h-[18px] shrink-0 items-center bg-[#f0f0f0] pl-[40%] text-[8px] text-[#333]">
      <div className="flex items-center gap-1.5 pl-0.5">
        <button aria-label="First page"><Ico s={9} sw={0}><path d="M11 3v18L1 12zM20 3v18l-8-9zM20 3h3v18h-3z" fill="#111" /></Ico></button>
        <button aria-label="Previous page"><Ico s={8} sw={0}><path d="M18 2v20L6 12z" fill="#111" /></Ico></button>
        <label className="flex h-[13px] w-[72px] items-center border border-[#aaa] bg-white px-0.5">
          <input aria-label="Page" defaultValue="3 / 82" className="min-w-0 flex-1 bg-transparent text-[9px] outline-none" /><Caret />
        </label>
        <button aria-label="Next page"><Ico s={8} sw={0}><path d="M6 2v20l12-10z" fill="#111" /></Ico></button>
        <button aria-label="Last page"><Ico s={9} sw={0}><path d="M1 3h3v18H1zM4 3l8 9-8 9zM13 3v18l10-9z" fill="#111" /></Ico></button>
        <button aria-label="Previous view"><Ico s={11} c="#66757a"><path d="M2 14V2h14M7 9h14v13H7z" fill="#fff" /><path d="M13 2h8v4M4 6l5-4" stroke="#4c9a89" strokeWidth="2" /></Ico></button>
        <button aria-label="Next view" className="-ml-px"><Ico s={11} c="#bbc4c4"><path d="M2 14V2h12v5M9 9h13v13H9z" /><path d="M2 14h6" /></Ico></button>
      </div>
      <div className="ml-auto flex items-center gap-[5px] pr-3">
        <button aria-label="Single page" className="px-px"><Ico s={10} c="#888"><path d="M4 1h16v22H4zM8 7h8M8 11h8M8 15h8" /></Ico></button>
        <button aria-label="Continuous" className="px-px"><Ico s={10} c="#888"><path d="M5 0v14h14V0M9 5h6M9 9h6M2 17h20M5 23v-4h14v4" /></Ico></button>
        <button aria-label="Facing" className="px-px"><Ico s={11} c="#888"><path d="M1 3h10v18H1zM13 3h10v18H13z" /></Ico></button>
        <button aria-label="Continuous facing" className="-ml-1 bg-[#c3d7f0] px-0.5"><Ico s={11} c="#777"><path d="M1 1v12h10V1M13 1v12h10V1M1 23v-7h10v7M13 23v-7h10v7" /></Ico></button>
        <label className="relative ml-1.5 flex items-center">
          <select aria-label="Zoom" className="w-[44px] appearance-none bg-transparent text-[9px]"><option>38.28%</option></select>
          <span className="pointer-events-none absolute right-0"><Caret /></span>
        </label>
        <button aria-label="Zoom out" className="-ml-1"><Ico s={11} c="#555"><circle cx="12" cy="12" r="10" /><path d="M7 12h10" /></Ico></button>
        <span className="relative -mr-1 flex items-center">
          <input aria-label="Zoom slider" type="range" defaultValue="16" className="h-2 w-[58px] appearance-none bg-[linear-gradient(#777,#777)] bg-size-[100%_1px] bg-center bg-no-repeat [&::-webkit-slider-thumb]:h-[6px] [&::-webkit-slider-thumb]:w-[3px] [&::-webkit-slider-thumb]:appearance-none [&::-webkit-slider-thumb]:bg-[#111]" />
          <span className="absolute left-1/2 h-1 w-px bg-[#777]" />
        </span>
        <button aria-label="Zoom in"><Ico s={11} c="#555"><circle cx="12" cy="12" r="10" /><path d="M7 12h10M12 7v10" /></Ico></button>
      </div>
    </footer>
  );
}

/* ---------- desktop task bar ---------- */

const Tg = ({ badge }: { badge?: string }) => (
  <span className="relative flex">
    <Ico s={15} sw={0}><circle cx="12" cy="12" r="11.500" fill="#2b8fca" /><path d="M4 12l15-7-3 14-4.500-3-2.500 2v-4z" fill="#fff" /></Ico>
    {badge && <span className="absolute -right-0.5 -bottom-0.5 rounded-full bg-[#e23b37] px-0.5 text-[5px] leading-[7px] text-white">{badge}</span>}
  </span>
);

const HomeIco = () => (
  <Ico s={15} c="#0a0a0a" sw={2.600}>
    <path d="M4 12v10h16V12" fill="#fff" /><path d="M1 13L12 3l11 10" /><path d="M5 8V3" strokeWidth="3" /><path d="M7 22v-7h5v7" strokeWidth="2" /><path d="M14.500 14.500h3v3h-3z" strokeWidth="1.500" />
  </Ico>
);

function TaskBar() {
  const items: [string, React.ReactNode, number][] = [
    ["Start menu", <Ico s={11} sw={0}><path d="M0 4l10-1.500V11H0zM11.500 2.200L24 0v11H11.500zM0 12.500h10V21L0 19.500zM11.500 12.500H24V24l-12.500-2z" fill="#0b0b0b" /></Ico>, 0],
    ["Edge", <Ico s={15} sw={0}><circle cx="12" cy="12" r="11.500" fill="#1b6fc0" /><path d="M1 10C3-3 23-3 23.500 11c0 5-6 6-9 4 2-3 0-7-4-7-5 0-8 1-9.500 2z" fill="#41cc8e" /><path d="M1 10C2-1 14-2 19 3c-8-2-14 2-18 7z" fill="#35b5d8" /><path d="M9 14c0-4 4-5 6-2-1 3 3 5 8 2-2 3-5 3-8 3s-6 0-6-3z" fill="#e7f1f5" /></Ico>, 0],
    ["Archicad", <Ico s={14} sw={0}><path d="M0 0h24v24H0z" fill="#d9f5fb" /><path d="M0 24C1 11 5 2 12 1v23z" fill="#5cd3ee" /><path d="M9 2c7 2 10 10 11 22h-7z" fill="#1aa7d6" /></Ico>, 0],
    ["Explorer", <Ico s={14} sw={0}><path d="M1 3h8l2 3h12v15H1z" fill="#f5c64b" /><path d="M1 3h8l2 3H1z" fill="#d79d25" /><path d="M5 22v-9h14v9h-4v-5H9v5z" fill="#4388c4" /></Ico>, 1],
    ["Foxit Reader", <FoxitMark s={16} />, 2],
    ["Phone", <Ico s={15} sw={0}><rect x="4" y="0" width="16" height="24" rx="1.500" fill="#1469b8" /><path d="M4 2h16v9H4z" fill="#63cdf4" /><path d="M4 8h16v8H4z" fill="#1d9ae0" /></Ico>, 0],
    ["Telegram", <Tg />, 0],
    ["Home design 1", <HomeIco />, 0],
    ["Home design 2", <HomeIco />, 0],
    ["Sync", <Ico s={15} sw={5}><path d="M11 4C5 4 2 10 4 15" stroke="#263b33" /><path d="M5 18c4 4 10 3 13-1" stroke="#26a56a" /><path d="M20 14c1-5-1-8-5-10" stroke="#1d4c3b" /></Ico>, 0],
    ["Home design 3", <HomeIco />, 0],
    ["Telegram work", <Tg badge="81" />, 1],
    ["C editor", <Ico s={13} c="#1b2756" sw={4}><path d="M20 5C12-2 2 4 2 12s10 14 18 7" /><circle cx="14" cy="12" r="4" fill="#d2274c" stroke="none" /></Ico>, 1],
    ["Home design 4", <HomeIco />, 1],
    ["Yandex", <Ico s={15} sw={0}><circle cx="12" cy="12" r="12" fill="#2e4877" /><path d="M6 6l6 7 6-7M12 12v8" stroke="#fff" strokeWidth="3.500" /></Ico>, 1],
    ["Protection", <Ico s={14} sw={0}><rect x="0" y="0" width="24" height="24" rx="4" fill="#cbd7f2" /><path d="M3 4l9-2 9 2v13l-9 6-9-6z" fill="#5c7fd0" /><path d="M12 2l9 2v13l-9 6z" fill="#a9bdec" /><path d="M11 18l7-11" stroke="#fff" strokeWidth="2" /></Ico>, 1],
    ["Calculator", <Ico s={15} sw={0}><path d="M3 0h18v24H3z" fill="#3b6478" /><path d="M5 2h14v6H5z" fill="#7cd0e8" /><path d="M5 10h4v3H5zM10 10h4v3h-4zM5 15h4v3H5zM10 15h4v3h-4zM5 20h4v2H5zM10 20h4v2h-4zM15 10h4v3h-4z" fill="#dbeaf0" /><path d="M15 15h4v7h-4z" fill="#275fa8" /></Ico>, 1],
    ["Camera", <Ico s={15} sw={0}><rect width="24" height="24" rx="3" fill="#0c1030" /><path d="M3 3h18v18H3z" fill="#4a35a5" /><circle cx="12" cy="12" r="8" fill="#2877d0" /><circle cx="12" cy="12" r="5" fill="#131a4a" /><circle cx="17" cy="18" r="2.500" fill="#a94ddb" /></Ico>, 1],
  ];
  return (
    <aside className="flex w-[45px] shrink-0 flex-col bg-linear-to-b from-[#dcdbd7] via-[#e0dade] to-[#ded9d7] font-['Open_Sans','Noto_Sans',sans-serif] text-[7px] text-[#222]">
      <div className="flex h-[525px] flex-col">
        {items.map(([n, i, st]) => (
          <button key={n} aria-label={n} className={`flex flex-1 items-center justify-center ${st === 2 ? "bg-[#f3f1f0]" : ""}`}>
            <span className="flex flex-1 justify-center">{i}</span>
            {st > 0 && <span className="-ml-0.5 h-6 w-0.5 bg-[#3b7fd0]" />}
          </button>
        ))}
      </div>
      <div className="mt-auto flex flex-col items-center pb-[13px]">
        <div className="flex items-center gap-2">
          <button aria-label="Show hidden icons"><Ico s={8} c="#222" sw={3}><path d="M17 1L6 12l11 11" /></Ico></button>
          <button aria-label="Network"><Ico s={9} c="#333" sw={2}><path d="M2 22C2 10 10 2 22 2M8 22c0-8 6-14 14-14M14 22c0-5 3-8 8-8M19 22c0-2 1-3 3-3" /></Ico></button>
        </div>
        <button className="mt-2 leading-[10px]">РУС</button>
        <time className="mt-[13px] text-center leading-[11px]">20:47<br />12.12.2025</time>
        <button aria-label="Notification center" className="mt-[11px]"><Ico s={11} c="#222" sw={2}><path d="M1 3h22v15h-8l-3 4v-4H1z" /></Ico></button>
      </div>
    </aside>
  );
}

export default function App() {
  return (
    <div className="flex h-screen overflow-hidden bg-[#efefef] font-[Roboto,sans-serif] [text-rendering:geometricPrecision]">
      <main className="flex min-w-0 flex-1 flex-col">
        <TitleBar />
        <MenuTabs />
        <Ribbon />
        <DocTabs />
        <div className="flex min-h-0 flex-1">
          <SideBar />
          <div className="flex min-w-0 flex-1 justify-center overflow-hidden bg-[#a9a9a9]">
            <div className="grid grid-cols-[auto_auto] content-start gap-x-[5px] gap-y-1.5 pl-0.5">
              <Sheet3 /><Sheet4 /><Sheet5 /><Sheet6 />
            </div>
          </div>
          <div className="flex w-[11px] shrink-0 flex-col items-center bg-[#f0f0f0] py-0.5">
            <span className="h-1 w-full border border-[#888]" />
            <span className="pt-0.5"><Ico s={6} c="#333" sw={4}><path d="M2 17L12 7l10 10" /></Ico></span>
            <span className="mt-3 h-[25px] w-[9px] bg-[#cdcdcd]" />
            <span className="mt-auto"><Ico s={6} c="#333" sw={4}><path d="M2 7l10 10L22 7" /></Ico></span>
          </div>
        </div>
        <StatusBar />
      </main>
      <TaskBar />
    </div>
  );
}
